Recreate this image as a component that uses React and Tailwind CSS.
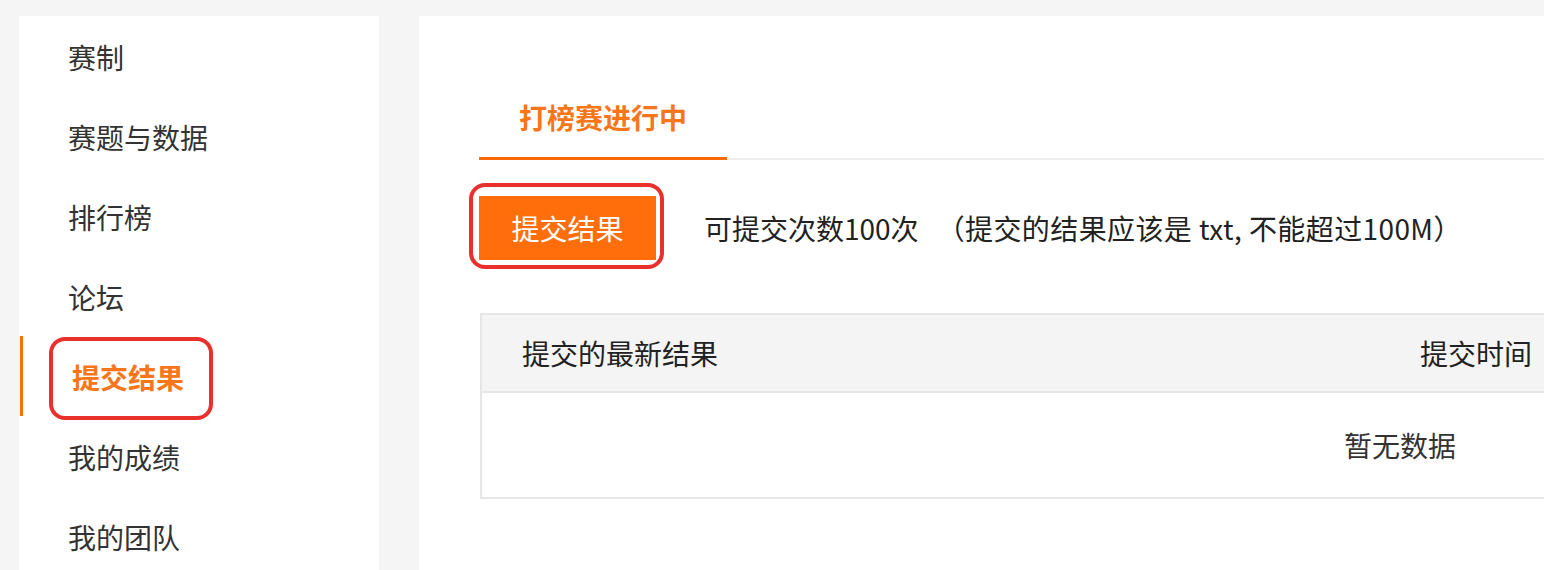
import React from "react";

const font = { fontFamily: '"Noto Sans CJK SC", "Noto Sans", sans-serif' };

const navItems = ["赛制", "赛题与数据", "排行榜", "论坛", "提交结果", "我的成绩", "我的团队"];

export default function App() {
  return (
    <div
      className="w-[1544px] h-[570px] overflow-hidden bg-[#f5f5f5] flex gap-10 pt-4 pl-[19px]"
      style={font}
    >
      <aside className="w-[360px] shrink-0 bg-white flex flex-col pt-[1px] overflow-hidden">
        {navItems.map((item) => {
          const active = item === "提交结果";
          return (
            <div key={item} className="relative h-20 shrink-0 flex items-center">
              {active ? (
                <>
                  <div className="absolute left-[1px] top-[-1px] h-20 w-[3px] bg-[#f2730f]" />
                  <span className="pl-[53px] text-[28px] font-bold text-[#f7761a] leading-none">
                    {item}
                  </span>
                  <div className="absolute left-[30px] top-0 w-[164px] h-[83px] border-4 border-[#e8312c] rounded-[16px]" />
                </>
              ) : (
                <span className="pl-[49px] text-[28px] text-[#333] leading-none">{item}</span>
              )}
            </div>
          );
        })}
      </aside>

      <main className="w-[1900px] shrink-0 bg-white pl-[60px] pt-[80px]">
        <div className="flex border-b-2 border-[#eeeeee]">
          <div className="-mb-[2px] px-[40px] pb-[19px] border-b-[3px] border-[#ff6a00] text-[28px] leading-[42px] font-bold text-[#f7761a]">
            打榜赛进行中
          </div>
        </div>

        <div className="flex items-center mt-[36px]">
          <div className="relative">
            <button className="w-[177px] h-[64px] bg-[#ff6e0a] text-white text-[28px] leading-none flex items-center justify-center">
              提交结果
            </button>
            <div className="absolute left-[-10px] top-[-13px] w-[195px] h-[86px] border-4 border-[#e8312c] rounded-[16px]" />
          </div>
          <span className="ml-[48px] text-[28px] text-[#222] leading-none">可提交次数100次</span>
          <span className="ml-[18px] text-[28px] text-[#222] leading-none tracking-[0.4px]">（提交的结果应该是 txt, 不能超过100M）</span>
        </div>

        <div className="mt-[53px] w-[1840px] ml-[1px] border-2 border-[#e6e6e6]">
          <div className="flex h-[78px] items-center bg-[#f4f4f4] border-b-2 border-[#e6e6e6]">
            <div className="w-[897px] pl-[40px] text-[28px] text-[#222] leading-none">提交的最新结果</div>
            <div className="pl-[41px] text-[28px] text-[#222] leading-none">提交时间</div>
          </div>
          <div className="h-[104px] flex items-center justify-center text-[28px] text-[#333] leading-none">
            暂无数据
          </div>
        </div>
      </main>
    </div>
  );
}
